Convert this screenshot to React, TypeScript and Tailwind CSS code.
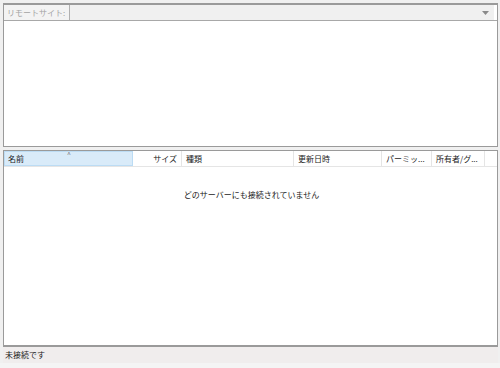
import React from "react";

const font = { fontFamily: '"Noto Sans CJK JP", "Noto Sans", sans-serif' };

export default function App() {
  return (
    <div className="w-[500px] h-[368px] bg-[#f0f0f0] flex flex-col overflow-hidden text-[8px] leading-none text-[#1a1a1a]" style={font}>
      {/* top panel */}
      <div className="mt-[3px] ml-[3px] mr-[2px] h-[144px] border border-[#9a9a9a] border-t-2 flex flex-col bg-white">
        <div className="h-[16px] flex border-b border-[#a8a8a8] bg-[#f0f0f0]">
          <div className="w-[66px] flex items-center pl-[3px] text-[#a3a3a3] border-r border-[#b0b0b0] bg-[#f3f3f3]">リモートサイト:</div>
          <div className="flex-1 flex items-center justify-end pr-[5px] bg-[#f0f0f0] border-r-[3px] border-white">
            <svg width="7" height="4" viewBox="0 0 7 4"><path d="M0 0h7L3.5 4z" fill="#8a8a8a" /></svg>
          </div>
        </div>
        <div className="flex-1 bg-white" />
      </div>
      {/* splitter */}
      <div className="h-[3px]" />
      {/* bottom panel */}
      <div className="ml-[3px] mr-[2px] flex-1 border border-[#9a9a9a] border-b-2 flex flex-col bg-white">
        <div className="h-[16px] flex bg-white border-b border-[#e5e5e5] relative">
          <div className="w-[129px] flex items-center pl-[3px] bg-[#d9ebf9] border border-[#bcdcf4] relative">
            名前
            <span className="absolute left-[62px] top-[-1px] text-[7px] text-[#7a7a7a]">^</span>
          </div>
          <div className="w-[49px] flex items-center justify-end pr-[4px] border-r border-[#e5e5e5]">サイズ</div>
          <div className="w-[112px] flex items-center pl-[4px] border-r border-[#e5e5e5]">種類</div>
          <div className="w-[88px] flex items-center pl-[4px] border-r border-[#e5e5e5]">更新日時</div>
          <div className="w-[50px] flex items-center pl-[4px] border-r border-[#e5e5e5]">パーミッ...</div>
          <div className="w-[53px] flex items-center pl-[4px] border-r border-[#e5e5e5]">所有者/グ...</div>
          <div className="flex-1" />
        </div>
        <div className="flex-1 bg-white flex justify-center pt-[24px]">
          <span className="ml-[2px]">どのサーバーにも接続されていません</span>
        </div>
      </div>
      {/* status bar */}
      <div className="ml-[3px] mr-[2px] h-[16px] bg-[#f0eded] flex items-center pl-[2px]">未接続です</div>
      <div className="h-[5px] bg-[#f4f4f4]" />
    </div>
  );
}
